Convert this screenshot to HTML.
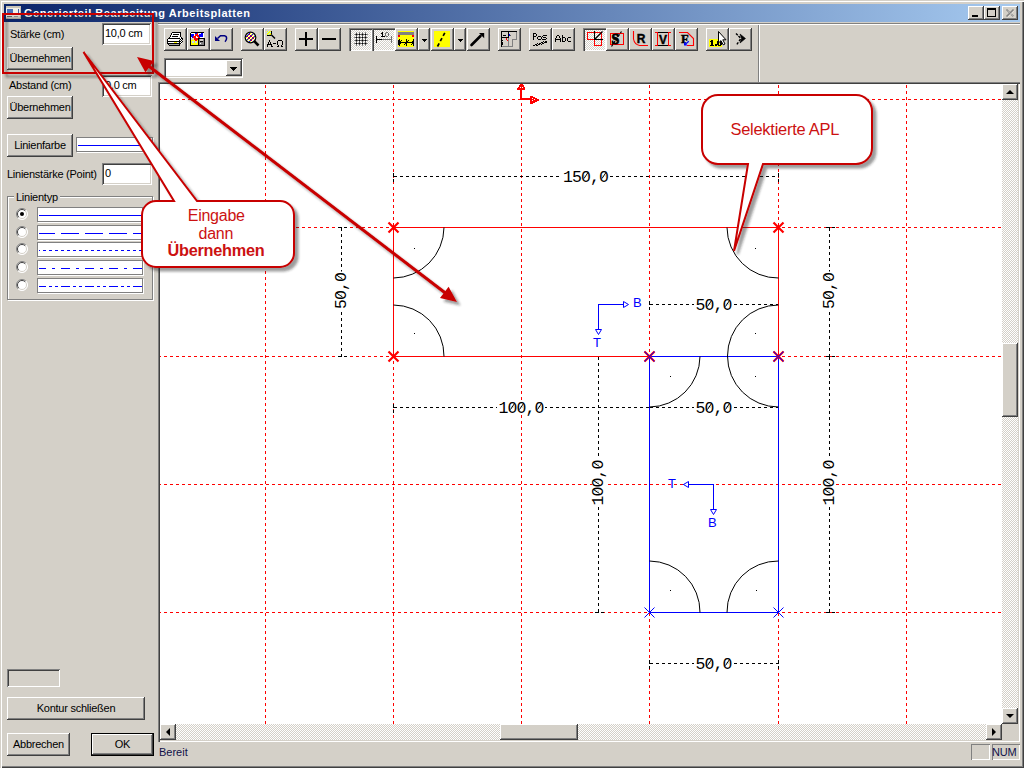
<!DOCTYPE html>
<html><head><meta charset="utf-8">
<style>
*{box-sizing:border-box}
html,body{margin:0;padding:0}
body{width:1024px;height:768px;position:relative;overflow:hidden;background:#d4d0c8;font-family:"Liberation Sans",sans-serif;font-size:11px;color:#000;letter-spacing:-0.25px}
.a{position:absolute}
.raised{background:#d4d0c8;box-shadow:inset -1px -1px #404040,inset 1px 1px #fff,inset -2px -2px #808080}
.sunken{background:#fff;box-shadow:inset 1px 1px #808080,inset -1px -1px #fff,inset 2px 2px #404040,inset -2px -2px #d4d0c8}
.thin{background:#d4d0c8;box-shadow:inset 1px 1px #808080,inset -1px -1px #fff}
.tb{background:#d4d0c8;box-shadow:inset -1px -1px #404040,inset 1px 1px #fff,inset -2px -2px #808080}
.pressed{background:repeating-conic-gradient(#d4d0c8 0% 25%,#fff 0% 50%) 0 0/2px 2px;box-shadow:inset 1px 1px #808080,inset 2px 2px #404040,inset -1px -1px #fff}
.track{background:repeating-conic-gradient(#d4d0c8 0% 25%,#fff 0% 50%) 0 0/2px 2px}
.lbl{white-space:nowrap;line-height:13px}
.btxt{position:absolute;left:0;right:0;text-align:center;white-space:nowrap;line-height:13px}
.txt{white-space:nowrap}
</style></head>
<body>
<!-- window frame -->
<div class="a" style="left:0;top:0;width:1024px;height:768px;box-shadow:inset 1px 1px #d4d0c8,inset 2px 2px #fff,inset -1px -1px #404040,inset -2px -2px #808080"></div>
<!-- title bar -->
<div class="a" style="left:4px;top:4px;width:1016px;height:18px;background:linear-gradient(90deg,#0a246a,#a6caf0)"></div>
<div class="a txt" style="left:24px;top:5px;font-weight:bold;font-size:11px;letter-spacing:0.55px;line-height:16px;color:#fff">Generierteil Bearbeitung Arbeitsplatten</div>
<div class="a raised" style="left:968px;top:6px;width:16px;height:14px"><div class="a" style="left:4px;top:9px;width:6px;height:2px;background:#000"></div></div>
<div class="a raised" style="left:984px;top:6px;width:16px;height:14px"><div class="a" style="left:3px;top:2px;width:9px;height:9px;border:1px solid #000;border-top-width:2px"></div></div>
<div class="a raised" style="left:1002px;top:6px;width:16px;height:14px">
<svg class="a" style="left:0;top:0" width="16" height="14"><path d="M4.5 3.5 L11.5 10.5 M11.5 3.5 L4.5 10.5" stroke="#808080" stroke-width="1.5"/><path d="M5.5 4.5 L12.5 11.5 M12.5 4.5 L5.5 11.5" stroke="#fff" stroke-width="0.6" opacity="0.6"/></svg></div>

<!-- LEFT PANEL -->
<div class="a lbl" style="left:10px;top:28px">Stärke (cm)</div>
<div class="a sunken" style="left:102px;top:23px;width:49px;height:22px"><div class="a txt" style="left:3px;top:4px;line-height:13px">10,0 cm</div></div>
<div class="a raised" style="left:7px;top:47px;width:66px;height:23px"><div class="btxt" style="top:5px">Übernehmen</div></div>

<div class="a lbl" style="left:9px;top:79px">Abstand (cm)</div>
<div class="a sunken" style="left:102px;top:75px;width:50px;height:22px"><div class="a txt" style="left:3px;top:4px;line-height:13px">0,0 cm</div></div>
<div class="a raised" style="left:7px;top:96px;width:66px;height:23px"><div class="btxt" style="top:5px">Übernehmen</div></div>

<div class="a raised" style="left:7px;top:134px;width:66px;height:23px"><div class="btxt" style="top:5px">Linienfarbe</div></div>
<div class="a" style="left:76px;top:137px;width:77px;height:15px;background:#fff;border:1px solid #808080;box-shadow:1px 1px #fff"><div class="a" style="left:1px;top:7px;width:72px;height:1px;background:#0000ff"></div></div>

<div class="a lbl" style="left:7px;top:168px">Linienstärke (Point)</div>
<div class="a sunken" style="left:102px;top:163px;width:50px;height:22px"><div class="a txt" style="left:3px;top:4px;line-height:13px">0</div></div>

<!-- group -->
<div class="a" style="left:7px;top:196px;width:146px;height:104px;border:1px solid #808080;box-shadow:1px 1px #fff,inset 1px 1px #fff"></div>
<div class="a lbl" style="left:14px;top:191px;background:#d4d0c8;padding:0 2px">Linientyp</div>

<svg class="a" style="left:16px;top:208px" width="12" height="12"><circle cx="6" cy="6" r="5.5" fill="#fff"/><path d="M2.1 9.9 A5.5 5.5 0 0 1 9.9 2.1" fill="none" stroke="#808080"/><path d="M9.9 2.1 A5.5 5.5 0 0 1 2.1 9.9" fill="none" stroke="#fff"/><path d="M2.8 9.2 A4.5 4.5 0 0 1 9.2 2.8" fill="none" stroke="#404040"/><path d="M9.2 2.8 A4.5 4.5 0 0 1 2.8 9.2" fill="none" stroke="#d4d0c8"/><circle cx="6" cy="6" r="2" fill="#000"/></svg>
<div class="a" style="left:37px;top:207px;width:106px;height:15px;background:#fff;border:1px solid #808080;box-shadow:1px 1px #fff"></div><svg class="a" style="left:39px;top:215px" width="103" height="1"><line x1="0" y1="0.5" x2="103" y2="0.5" stroke="#0000ff" shape-rendering="crispEdges"/></svg>
<svg class="a" style="left:16px;top:226px" width="12" height="12"><circle cx="6" cy="6" r="5.5" fill="#fff"/><path d="M2.1 9.9 A5.5 5.5 0 0 1 9.9 2.1" fill="none" stroke="#808080"/><path d="M9.9 2.1 A5.5 5.5 0 0 1 2.1 9.9" fill="none" stroke="#fff"/><path d="M2.8 9.2 A4.5 4.5 0 0 1 9.2 2.8" fill="none" stroke="#404040"/><path d="M9.2 2.8 A4.5 4.5 0 0 1 2.8 9.2" fill="none" stroke="#d4d0c8"/></svg>
<div class="a" style="left:37px;top:225px;width:106px;height:15px;background:#fff;border:1px solid #808080;box-shadow:1px 1px #fff"></div><svg class="a" style="left:39px;top:233px" width="103" height="1"><line x1="0" y1="0.5" x2="103" y2="0.5" stroke="#0000ff" shape-rendering="crispEdges" stroke-dasharray="18 6" stroke-dashoffset="2"/></svg>
<svg class="a" style="left:16px;top:243px" width="12" height="12"><circle cx="6" cy="6" r="5.5" fill="#fff"/><path d="M2.1 9.9 A5.5 5.5 0 0 1 9.9 2.1" fill="none" stroke="#808080"/><path d="M9.9 2.1 A5.5 5.5 0 0 1 2.1 9.9" fill="none" stroke="#fff"/><path d="M2.8 9.2 A4.5 4.5 0 0 1 9.2 2.8" fill="none" stroke="#404040"/><path d="M9.2 2.8 A4.5 4.5 0 0 1 2.8 9.2" fill="none" stroke="#d4d0c8"/></svg>
<div class="a" style="left:37px;top:242px;width:106px;height:15px;background:#fff;border:1px solid #808080;box-shadow:1px 1px #fff"></div><svg class="a" style="left:39px;top:250px" width="103" height="1"><line x1="0" y1="0.5" x2="103" y2="0.5" stroke="#0000ff" shape-rendering="crispEdges" stroke-dasharray="3 3" stroke-dashoffset="2"/></svg>
<svg class="a" style="left:16px;top:261px" width="12" height="12"><circle cx="6" cy="6" r="5.5" fill="#fff"/><path d="M2.1 9.9 A5.5 5.5 0 0 1 9.9 2.1" fill="none" stroke="#808080"/><path d="M9.9 2.1 A5.5 5.5 0 0 1 2.1 9.9" fill="none" stroke="#fff"/><path d="M2.8 9.2 A4.5 4.5 0 0 1 9.2 2.8" fill="none" stroke="#404040"/><path d="M9.2 2.8 A4.5 4.5 0 0 1 2.8 9.2" fill="none" stroke="#d4d0c8"/></svg>
<div class="a" style="left:37px;top:260px;width:106px;height:15px;background:#fff;border:1px solid #808080;box-shadow:1px 1px #fff"></div><svg class="a" style="left:39px;top:268px" width="103" height="1"><line x1="0" y1="0.5" x2="103" y2="0.5" stroke="#0000ff" shape-rendering="crispEdges" stroke-dasharray="9 6 3 6" stroke-dashoffset="2"/></svg>
<svg class="a" style="left:16px;top:279px" width="12" height="12"><circle cx="6" cy="6" r="5.5" fill="#fff"/><path d="M2.1 9.9 A5.5 5.5 0 0 1 9.9 2.1" fill="none" stroke="#808080"/><path d="M9.9 2.1 A5.5 5.5 0 0 1 2.1 9.9" fill="none" stroke="#fff"/><path d="M2.8 9.2 A4.5 4.5 0 0 1 9.2 2.8" fill="none" stroke="#404040"/><path d="M9.2 2.8 A4.5 4.5 0 0 1 2.8 9.2" fill="none" stroke="#d4d0c8"/></svg>
<div class="a" style="left:37px;top:278px;width:106px;height:15px;background:#fff;border:1px solid #808080;box-shadow:1px 1px #fff"></div><svg class="a" style="left:39px;top:286px" width="103" height="1"><line x1="0" y1="0.5" x2="103" y2="0.5" stroke="#0000ff" shape-rendering="crispEdges" stroke-dasharray="9 3 3 3 3 3" stroke-dashoffset="2"/></svg>
<!-- bottom left -->
<div class="a" style="left:7px;top:669px;width:53px;height:18px;background:#d4d0c8;box-shadow:inset 1px 1px #808080,inset -1px -1px #fff,inset 2px 2px #404040,inset -2px -2px #d4d0c8"></div>
<div class="a raised" style="left:7px;top:697px;width:138px;height:23px"><div class="btxt" style="top:5px">Kontur schließen</div></div>
<div class="a raised" style="left:7px;top:733px;width:63px;height:23px"><div class="btxt" style="top:5px">Abbrechen</div></div>
<div class="a" style="left:91px;top:733px;width:63px;height:23px;background:#d4d0c8;box-shadow:inset 0 0 0 1px #000,inset -2px -2px #404040,inset 2px 2px #fff,inset -3px -3px #808080"><div class="btxt" style="top:5px">OK</div></div>

<!-- TOOLBAR etched lines -->
<div class="a" style="left:158px;top:23px;width:862px;height:1px;background:#808080"></div>
<div class="a" style="left:158px;top:24px;width:862px;height:1px;background:#fff"></div>
<div class="a" style="left:758px;top:25px;width:1px;height:57px;background:#808080"></div>
<div class="a" style="left:759px;top:25px;width:1px;height:57px;background:#fff"></div>

<!-- CANVAS FRAME -->
<div class="a" style="left:158px;top:82px;width:862px;height:660px;box-shadow:inset 1px 1px #808080,inset 2px 2px #404040,inset -1px -1px #fff,inset -2px -2px #d4d0c8"></div>
<div class="a" style="left:160px;top:84px;width:842px;height:640px;background:#fff;overflow:hidden"></div>
<svg class="a" style="left:160px;top:84px" width="842" height="640" viewBox="160 84 842 640">
<g fill="none" stroke-width="1" shape-rendering="crispEdges">
<line x1="265.5" y1="84" x2="265.5" y2="724" stroke="#f00" stroke-dasharray="3 3" stroke-dashoffset="-1"/>
<line x1="393.5" y1="84" x2="393.5" y2="724" stroke="#f00" stroke-dasharray="3 3" stroke-dashoffset="-1"/>
<line x1="521.5" y1="84" x2="521.5" y2="724" stroke="#f00" stroke-dasharray="3 3" stroke-dashoffset="-1"/>
<line x1="649.5" y1="84" x2="649.5" y2="724" stroke="#f00" stroke-dasharray="3 3" stroke-dashoffset="-1"/>
<line x1="778.5" y1="84" x2="778.5" y2="724" stroke="#f00" stroke-dasharray="3 3" stroke-dashoffset="-1"/>
<line x1="906.5" y1="84" x2="906.5" y2="724" stroke="#f00" stroke-dasharray="3 3" stroke-dashoffset="-1"/>
<line x1="160" y1="99.5" x2="1002" y2="99.5" stroke="#f00" stroke-dasharray="3 3" stroke-dashoffset="2"/>
<line x1="160" y1="227.5" x2="1002" y2="227.5" stroke="#f00" stroke-dasharray="3 3" stroke-dashoffset="2"/>
<line x1="160" y1="356.5" x2="1002" y2="356.5" stroke="#f00" stroke-dasharray="3 3" stroke-dashoffset="2"/>
<line x1="160" y1="484.5" x2="1002" y2="484.5" stroke="#f00" stroke-dasharray="3 3" stroke-dashoffset="2"/>
<line x1="160" y1="612.5" x2="1002" y2="612.5" stroke="#f00" stroke-dasharray="3 3" stroke-dashoffset="2"/>
<line x1="393" y1="176.5" x2="779" y2="176.5" stroke="#000" stroke-dasharray="3 3" stroke-dashoffset="-1"/>
<line x1="393.5" y1="173" x2="393.5" y2="182" stroke="#000" stroke-dasharray="3 3"/>
<rect x="393" y="176" width="1" height="1" fill="#000"/>
<line x1="778.5" y1="173" x2="778.5" y2="182" stroke="#000" stroke-dasharray="3 3"/>
<rect x="778" y="176" width="1" height="1" fill="#000"/>
<line x1="341.5" y1="227" x2="341.5" y2="357" stroke="#000" stroke-dasharray="3 3" stroke-dashoffset="-1"/>
<line x1="338" y1="227.5" x2="347" y2="227.5" stroke="#000" stroke-dasharray="3 3"/>
<rect x="341" y="227" width="1" height="1" fill="#000"/>
<line x1="338" y1="356.5" x2="347" y2="356.5" stroke="#000" stroke-dasharray="3 3"/>
<rect x="341" y="356" width="1" height="1" fill="#000"/>
<line x1="829.5" y1="227" x2="829.5" y2="357" stroke="#000" stroke-dasharray="3 3" stroke-dashoffset="-1"/>
<line x1="826" y1="227.5" x2="835" y2="227.5" stroke="#000" stroke-dasharray="3 3"/>
<rect x="829" y="227" width="1" height="1" fill="#000"/>
<line x1="826" y1="356.5" x2="835" y2="356.5" stroke="#000" stroke-dasharray="3 3"/>
<rect x="829" y="356" width="1" height="1" fill="#000"/>
<line x1="649" y1="304.5" x2="779" y2="304.5" stroke="#000" stroke-dasharray="3 3" stroke-dashoffset="-1"/>
<line x1="649.5" y1="301" x2="649.5" y2="310" stroke="#000" stroke-dasharray="3 3"/>
<rect x="649" y="304" width="1" height="1" fill="#000"/>
<line x1="393" y1="407.5" x2="650" y2="407.5" stroke="#000" stroke-dasharray="3 3" stroke-dashoffset="-1"/>
<line x1="393.5" y1="404" x2="393.5" y2="413" stroke="#000" stroke-dasharray="3 3"/>
<rect x="393" y="407" width="1" height="1" fill="#000"/>
<line x1="649.5" y1="404" x2="649.5" y2="413" stroke="#000" stroke-dasharray="3 3"/>
<rect x="649" y="407" width="1" height="1" fill="#000"/>
<line x1="649" y1="407.5" x2="779" y2="407.5" stroke="#000" stroke-dasharray="3 3" stroke-dashoffset="-1"/>
<line x1="598.5" y1="356" x2="598.5" y2="613" stroke="#000" stroke-dasharray="3 3" stroke-dashoffset="-1"/>
<line x1="595" y1="612.5" x2="604" y2="612.5" stroke="#000" stroke-dasharray="3 3"/>
<rect x="598" y="612" width="1" height="1" fill="#000"/>
<line x1="829.5" y1="356" x2="829.5" y2="613" stroke="#000" stroke-dasharray="3 3" stroke-dashoffset="-1"/>
<line x1="826" y1="612.5" x2="835" y2="612.5" stroke="#000" stroke-dasharray="3 3"/>
<rect x="829" y="612" width="1" height="1" fill="#000"/>
<line x1="649" y1="663.5" x2="779" y2="663.5" stroke="#000" stroke-dasharray="3 3" stroke-dashoffset="-1"/>
<line x1="649.5" y1="660" x2="649.5" y2="669" stroke="#000" stroke-dasharray="3 3"/>
<rect x="649" y="663" width="1" height="1" fill="#000"/>
<line x1="778.5" y1="660" x2="778.5" y2="669" stroke="#000" stroke-dasharray="3 3"/>
<rect x="778" y="663" width="1" height="1" fill="#000"/>
</g>
<g fill="none" stroke-width="1" shape-rendering="crispEdges">
<path d="M393.5 356.5 V227.5 H778.5 V356.5" stroke="#f00"/>
<line x1="393" y1="356.5" x2="649" y2="356.5" stroke="#f00"/>
<path d="M649.5 356.5 H778.5 V612.5 H649.5 Z" stroke="#00f"/>
</g>
<g fill="none" stroke="#000" stroke-width="1">
<path d="M444 227.5 A51 51 0 0 1 393.5 278"/>
<path d="M393.5 305 A51 51 0 0 1 444 356.5"/>
<path d="M727 227.5 A51 51 0 0 0 778.5 278"/>
<path d="M778.5 305 A51 51 0 0 0 778.5 407"/>
<path d="M700 356.5 A51 51 0 0 1 649.5 407"/>
<path d="M649.5 561 A51 51 0 0 1 700 612.5"/>
<path d="M727 612.5 A51 51 0 0 1 778.5 561"/>
</g>
<g fill="#000">
<rect x="414" y="248" width="1" height="1"/>
<rect x="414" y="333" width="1" height="1"/>
<rect x="755" y="248" width="1" height="1"/>
<rect x="755" y="333" width="1" height="1"/>
<rect x="755" y="376" width="1" height="1"/>
<rect x="670" y="376" width="1" height="1"/>
<rect x="670" y="590" width="1" height="1"/>
<rect x="756" y="590" width="1" height="1"/>
</g>
<path d="M388.5 222.5 L398.5 232.5 M398.5 222.5 L388.5 232.5" stroke="#f00" stroke-width="2.2" fill="none"/>
<path d="M773.5 222.5 L783.5 232.5 M783.5 222.5 L773.5 232.5" stroke="#f00" stroke-width="2.2" fill="none"/>
<path d="M388.5 351.5 L398.5 361.5 M398.5 351.5 L388.5 361.5" stroke="#f00" stroke-width="2.2" fill="none"/>
<path d="M644.5 351.5 L654.5 361.5 M654.5 351.5 L644.5 361.5" stroke="#f00" stroke-width="2.2" fill="none"/>
<path d="M773.5 351.5 L783.5 361.5 M783.5 351.5 L773.5 361.5" stroke="#f00" stroke-width="2.2" fill="none"/>
<path d="M644.5 351.5 L654.5 361.5 M654.5 351.5 L644.5 361.5" stroke="#00f" stroke-width="1" fill="none"/>
<path d="M773.5 351.5 L783.5 361.5 M783.5 351.5 L773.5 361.5" stroke="#00f" stroke-width="1" fill="none"/>
<path d="M644.5 607.5 L654.5 617.5 M654.5 607.5 L644.5 617.5" stroke="#00f" stroke-width="1" fill="none"/>
<path d="M773.5 607.5 L783.5 617.5 M783.5 607.5 L773.5 617.5" stroke="#00f" stroke-width="1" fill="none"/>
<g font-family="Liberation Mono" font-size="16.5" letter-spacing="-0.9" fill="#000">
<rect x="561.5" y="170" width="48" height="13" fill="#fff"/>
<g transform="translate(585.5,176)"><text x="-22.5" y="6">150,0</text><rect x="-0.7" y="-1.2" width="2.4" height="2.4" fill="#fff"/><path d="M-1.5 2.5 L2.5 -3.5" stroke="#000" stroke-width="1" fill="none"/><rect x="17.3" y="-1.2" width="2.4" height="2.4" fill="#fff"/><path d="M16.5 2.5 L20.5 -3.5" stroke="#000" stroke-width="1" fill="none"/></g>
<rect x="335" y="271.5" width="13" height="39" fill="#fff"/>
<g transform="translate(340,291) rotate(-90)"><text x="-18.0" y="6">50,0</text><rect x="-5.2" y="-1.2" width="2.4" height="2.4" fill="#fff"/><path d="M-6.0 2.5 L-2.0 -3.5" stroke="#000" stroke-width="1" fill="none"/><rect x="12.8" y="-1.2" width="2.4" height="2.4" fill="#fff"/><path d="M12.0 2.5 L16.0 -3.5" stroke="#000" stroke-width="1" fill="none"/></g>
<rect x="823" y="271.5" width="13" height="39" fill="#fff"/>
<g transform="translate(828,291) rotate(-90)"><text x="-18.0" y="6">50,0</text><rect x="-5.2" y="-1.2" width="2.4" height="2.4" fill="#fff"/><path d="M-6.0 2.5 L-2.0 -3.5" stroke="#000" stroke-width="1" fill="none"/><rect x="12.8" y="-1.2" width="2.4" height="2.4" fill="#fff"/><path d="M12.0 2.5 L16.0 -3.5" stroke="#000" stroke-width="1" fill="none"/></g>
<rect x="694.0" y="298" width="39" height="13" fill="#fff"/>
<g transform="translate(713.5,304)"><text x="-18.0" y="6">50,0</text><rect x="-5.2" y="-1.2" width="2.4" height="2.4" fill="#fff"/><path d="M-6.0 2.5 L-2.0 -3.5" stroke="#000" stroke-width="1" fill="none"/><rect x="12.8" y="-1.2" width="2.4" height="2.4" fill="#fff"/><path d="M12.0 2.5 L16.0 -3.5" stroke="#000" stroke-width="1" fill="none"/></g>
<rect x="497.0" y="401" width="48" height="13" fill="#fff"/>
<g transform="translate(521,407)"><text x="-22.5" y="6">100,0</text><rect x="-9.7" y="-1.2" width="2.4" height="2.4" fill="#fff"/><path d="M-10.5 2.5 L-6.5 -3.5" stroke="#000" stroke-width="1" fill="none"/><rect x="-0.7" y="-1.2" width="2.4" height="2.4" fill="#fff"/><path d="M-1.5 2.5 L2.5 -3.5" stroke="#000" stroke-width="1" fill="none"/><rect x="17.3" y="-1.2" width="2.4" height="2.4" fill="#fff"/><path d="M16.5 2.5 L20.5 -3.5" stroke="#000" stroke-width="1" fill="none"/></g>
<rect x="694.0" y="401" width="39" height="13" fill="#fff"/>
<g transform="translate(713.5,407)"><text x="-18.0" y="6">50,0</text><rect x="-5.2" y="-1.2" width="2.4" height="2.4" fill="#fff"/><path d="M-6.0 2.5 L-2.0 -3.5" stroke="#000" stroke-width="1" fill="none"/><rect x="12.8" y="-1.2" width="2.4" height="2.4" fill="#fff"/><path d="M12.0 2.5 L16.0 -3.5" stroke="#000" stroke-width="1" fill="none"/></g>
<rect x="592" y="459.0" width="13" height="48" fill="#fff"/>
<g transform="translate(597,483) rotate(-90)"><text x="-22.5" y="6">100,0</text><rect x="-9.7" y="-1.2" width="2.4" height="2.4" fill="#fff"/><path d="M-10.5 2.5 L-6.5 -3.5" stroke="#000" stroke-width="1" fill="none"/><rect x="-0.7" y="-1.2" width="2.4" height="2.4" fill="#fff"/><path d="M-1.5 2.5 L2.5 -3.5" stroke="#000" stroke-width="1" fill="none"/><rect x="17.3" y="-1.2" width="2.4" height="2.4" fill="#fff"/><path d="M16.5 2.5 L20.5 -3.5" stroke="#000" stroke-width="1" fill="none"/></g>
<rect x="823" y="459.0" width="13" height="48" fill="#fff"/>
<g transform="translate(828,483) rotate(-90)"><text x="-22.5" y="6">100,0</text><rect x="-9.7" y="-1.2" width="2.4" height="2.4" fill="#fff"/><path d="M-10.5 2.5 L-6.5 -3.5" stroke="#000" stroke-width="1" fill="none"/><rect x="-0.7" y="-1.2" width="2.4" height="2.4" fill="#fff"/><path d="M-1.5 2.5 L2.5 -3.5" stroke="#000" stroke-width="1" fill="none"/><rect x="17.3" y="-1.2" width="2.4" height="2.4" fill="#fff"/><path d="M16.5 2.5 L20.5 -3.5" stroke="#000" stroke-width="1" fill="none"/></g>
<rect x="694.0" y="657" width="39" height="13" fill="#fff"/>
<g transform="translate(713.5,663)"><text x="-18.0" y="6">50,0</text><rect x="-5.2" y="-1.2" width="2.4" height="2.4" fill="#fff"/><path d="M-6.0 2.5 L-2.0 -3.5" stroke="#000" stroke-width="1" fill="none"/><rect x="12.8" y="-1.2" width="2.4" height="2.4" fill="#fff"/><path d="M12.0 2.5 L16.0 -3.5" stroke="#000" stroke-width="1" fill="none"/></g>
</g>
<g stroke="#00f" fill="none" stroke-width="1" shape-rendering="crispEdges">
<path d="M623 304.5 H598.5 V329"/>
<path d="M683 484.5 H713.5 V509"/>
</g>
<g stroke="#00f" fill="#fff" stroke-width="1">
<path d="M623.5 301.5 L628.5 304.5 L623.5 307.5 Z"/>
<path d="M595.5 329.5 L601.5 329.5 L598.5 334.5 Z"/>
<path d="M688.5 481.5 L683.5 484.5 L688.5 487.5 Z"/>
<path d="M710.5 509.5 L716.5 509.5 L713.5 514.5 Z"/>
</g>
<g font-family="Liberation Sans" font-size="13" fill="#00f">
<text x="633" y="307">B</text>
<text x="593" y="347">T</text>
<text x="668" y="488">T</text>
<text x="708" y="527">B</text>
</g>
<g fill="#f00" shape-rendering="crispEdges">
<rect x="520" y="90" width="2" height="10"/>
<rect x="520" y="98" width="10" height="2"/>
<rect x="520" y="84" width="3" height="1"/>
<rect x="519" y="85" width="5" height="2"/>
<rect x="518" y="87" width="7" height="1"/>
<rect x="517" y="88" width="8" height="2"/>
<rect x="530" y="96" width="3" height="8"/>
<rect x="533" y="97" width="2" height="6"/>
<rect x="535" y="98" width="2" height="4"/>
<rect x="537" y="99" width="2" height="2"/>
</g>
<g fill="#fff" shape-rendering="crispEdges">
<rect x="520" y="87" width="1" height="1"/>
<rect x="522" y="87" width="1" height="1"/>
<rect x="532" y="98" width="1" height="1"/>
<rect x="532" y="100" width="1" height="1"/>
<rect x="534" y="99" width="1" height="1"/>
</g>
</svg>
<!-- vscroll -->
<div class="a track" style="left:1002px;top:84px;width:16px;height:640px"></div>
<div class="a raised" style="left:1002px;top:84px;width:16px;height:16px"><svg class="a" width="16" height="16"><path d="M4 10 L8 6 L12 10 Z" fill="#000"/></svg></div>
<div class="a raised" style="left:1002px;top:343px;width:16px;height:74px"></div>
<div class="a raised" style="left:1002px;top:708px;width:16px;height:16px"><svg class="a" width="16" height="16"><path d="M4 6 L8 10 L12 6 Z" fill="#000"/></svg></div>
<!-- hscroll -->
<div class="a track" style="left:160px;top:724px;width:842px;height:16px"></div>
<div class="a raised" style="left:160px;top:724px;width:16px;height:16px"><svg class="a" width="16" height="16"><path d="M10 4 L6 8 L10 12 Z" fill="#000"/></svg></div>
<div class="a raised" style="left:500px;top:724px;width:78px;height:16px"></div>
<div class="a raised" style="left:986px;top:724px;width:16px;height:16px"><svg class="a" width="16" height="16"><path d="M6 4 L10 8 L6 12 Z" fill="#000"/></svg></div>
<div class="a" style="left:1002px;top:724px;width:16px;height:16px;background:#d4d0c8"></div>

<!-- STATUS BAR -->
<div class="a txt" style="left:159px;top:746px;line-height:13px;color:#101048;letter-spacing:0">Bereit</div>
<div class="a thin" style="left:971px;top:744px;width:19px;height:16px"></div>
<div class="a thin" style="left:992px;top:744px;width:28px;height:16px"><div class="a txt" style="left:0px;top:2px;line-height:13px;color:#101048">NUM</div></div>

<div class="a tb" style="left:164px;top:28px;width:23px;height:23px"></div>
<svg class="a" style="left:164px;top:28px" width="23" height="23"><g shape-rendering="crispEdges">
<path d="M8 4 H17 V5 H16 V9 H15 V10 H5 V9 H6 V7 H7 V5 H8 Z" fill="#fff"/>
<rect x="8" y="4" width="9" height="1" fill="#000"/><rect x="7" y="5" width="1" height="2" fill="#000"/><rect x="6" y="7" width="1" height="2" fill="#000"/><rect x="5" y="9" width="1" height="1" fill="#000"/><rect x="16" y="5" width="1" height="4" fill="#000"/><rect x="9" y="6" width="6" height="1" fill="#000"/><rect x="8" y="8" width="6" height="1" fill="#000"/>
<rect x="4" y="10" width="12" height="1" fill="#000"/><rect x="3" y="11" width="1" height="5" fill="#000"/><rect x="4" y="16" width="1" height="1" fill="#000"/><rect x="5" y="17" width="11" height="1" fill="#000"/><rect x="4" y="13" width="12" height="1" fill="#000"/><rect x="4" y="15" width="12" height="1" fill="#000"/>
<rect x="4" y="11" width="11" height="2" fill="#fff"/><rect x="4" y="14" width="11" height="1" fill="#fff"/><rect x="10" y="14" width="3" height="1" fill="#ffff00"/>
<rect x="5" y="16" width="10" height="1" fill="#a0a0a0"/>
<rect x="16" y="8" width="1" height="1" fill="#000"/><rect x="17" y="9" width="1" height="1" fill="#000"/><rect x="15" y="10" width="1" height="1" fill="#000"/><rect x="16" y="11" width="1" height="1" fill="#000"/><rect x="17" y="12" width="1" height="1" fill="#000"/><rect x="18" y="11" width="1" height="1" fill="#000"/><rect x="15" y="12" width="1" height="1" fill="#000"/><rect x="16" y="13" width="1" height="1" fill="#000"/><rect x="18" y="13" width="1" height="1" fill="#000"/><rect x="17" y="14" width="1" height="1" fill="#000"/><rect x="15" y="14" width="1" height="1" fill="#000"/><rect x="16" y="15" width="1" height="1" fill="#000"/><rect x="15" y="16" width="1" height="1" fill="#000"/><rect x="17" y="10" width="1" height="1" fill="#000"/><rect x="18" y="10" width="1" height="1" fill="#000"/>
<rect x="16" y="9" width="1" height="1" fill="#fff"/><rect x="16" y="10" width="1" height="1" fill="#fff"/><rect x="17" y="11" width="1" height="1" fill="#fff"/><rect x="16" y="12" width="1" height="1" fill="#fff"/><rect x="17" y="13" width="1" height="1" fill="#fff"/><rect x="16" y="14" width="1" height="1" fill="#fff"/><rect x="17" y="15" width="1" height="1" fill="#fff"/>
</g></svg>
<div class="a tb" style="left:187px;top:28px;width:23px;height:23px"></div>
<svg class="a" style="left:187px;top:28px" width="23" height="23"><g shape-rendering="crispEdges">
<rect x="4" y="4" width="13" height="1" fill="#000"/><rect x="3" y="5" width="1" height="12" fill="#000"/><rect x="3" y="17" width="15" height="1" fill="#000"/>
<rect x="4" y="5" width="13" height="5" fill="#fff"/>
<rect x="4" y="6" width="3" height="3" fill="#0000ff"/><rect x="5" y="9" width="2" height="1" fill="#0000ff"/><rect x="8" y="5" width="2" height="1" fill="#0000ff"/><rect x="12" y="6" width="4" height="3" fill="#0000ff"/><rect x="14" y="5" width="2" height="1" fill="#0000ff"/><rect x="11" y="8" width="2" height="2" fill="#0000ff"/>
<rect x="4" y="10" width="7" height="2" fill="#d4d0c8"/>
<rect x="4" y="12" width="7" height="5" fill="#ffff00"/>
<rect x="5" y="13" width="2" height="2" fill="#c0d8f0"/><rect x="8" y="13" width="2" height="2" fill="#c0d8f0"/>
<rect x="5" y="11" width="1" height="1" fill="#ffff00"/>
<path d="M6 8 H8 V6 H10 V5 H11 V7 H12 V9 H13 V11 H11 V12 H10 V13 H8 V12 H7 V10 H6 Z" fill="#ff0000"/>
<rect x="9" y="8" width="1" height="2" fill="#fff"/><rect x="10" y="9" width="1" height="1" fill="#fff"/>
<rect x="11" y="10" width="7" height="1" fill="#000"/><rect x="11" y="10" width="1" height="8" fill="#000"/><rect x="17" y="10" width="1" height="8" fill="#000"/>
<rect x="12" y="11" width="5" height="6" fill="#808080"/>
<rect x="13" y="11" width="3" height="2" fill="#d4d0c8"/><rect x="13" y="13" width="3" height="1" fill="#000"/><rect x="13" y="15" width="1" height="1" fill="#fff"/>
</g></svg>
<div class="a tb" style="left:210px;top:28px;width:23px;height:23px"></div>
<svg class="a" style="left:210px;top:28px" width="23" height="23">
<path d="M5 8 V13 H10 Z" fill="#000080"/>
<path d="M7.5 10.5 L10.5 7.8 H14.5 Q16.6 8.2 16.6 10.3 Q16.6 12.3 15 13.8" fill="none" stroke="#000080" stroke-width="1.5"/>
</svg>
<div class="a tb" style="left:241px;top:28px;width:23px;height:23px"></div>
<svg class="a" style="left:241px;top:28px" width="23" height="23"><g shape-rendering="crispEdges"><rect x="5" y="8" width="1" height="1" fill="#0000ff"/><rect x="5" y="9" width="1" height="1" fill="#ffff00"/><rect x="5" y="10" width="1" height="1" fill="#fff"/><rect x="6" y="7" width="1" height="1" fill="#0000ff"/><rect x="6" y="8" width="1" height="1" fill="#ff0000"/><rect x="6" y="9" width="1" height="1" fill="#fff"/><rect x="6" y="10" width="1" height="1" fill="#ffff00"/><rect x="6" y="11" width="1" height="1" fill="#0000ff"/><rect x="7" y="6" width="1" height="1" fill="#0000ff"/><rect x="7" y="7" width="1" height="1" fill="#ffff00"/><rect x="7" y="8" width="1" height="1" fill="#fff"/><rect x="7" y="9" width="1" height="1" fill="#ff0000"/><rect x="7" y="10" width="1" height="1" fill="#0000ff"/><rect x="7" y="11" width="1" height="1" fill="#ffff00"/><rect x="7" y="12" width="1" height="1" fill="#fff"/><rect x="8" y="5" width="1" height="1" fill="#0000ff"/><rect x="8" y="6" width="1" height="1" fill="#ff0000"/><rect x="8" y="7" width="1" height="1" fill="#fff"/><rect x="8" y="8" width="1" height="1" fill="#ffff00"/><rect x="8" y="9" width="1" height="1" fill="#0000ff"/><rect x="8" y="10" width="1" height="1" fill="#ff0000"/><rect x="8" y="11" width="1" height="1" fill="#fff"/><rect x="8" y="12" width="1" height="1" fill="#ffff00"/><rect x="8" y="13" width="1" height="1" fill="#0000ff"/><rect x="9" y="5" width="1" height="1" fill="#ffff00"/><rect x="9" y="6" width="1" height="1" fill="#fff"/><rect x="9" y="7" width="1" height="1" fill="#ff0000"/><rect x="9" y="8" width="1" height="1" fill="#0000ff"/><rect x="9" y="9" width="1" height="1" fill="#ffff00"/><rect x="9" y="10" width="1" height="1" fill="#fff"/><rect x="9" y="11" width="1" height="1" fill="#ff0000"/><rect x="9" y="12" width="1" height="1" fill="#0000ff"/><rect x="9" y="13" width="1" height="1" fill="#ffff00"/><rect x="10" y="5" width="1" height="1" fill="#fff"/><rect x="10" y="6" width="1" height="1" fill="#ffff00"/><rect x="10" y="7" width="1" height="1" fill="#0000ff"/><rect x="10" y="8" width="1" height="1" fill="#ff0000"/><rect x="10" y="9" width="1" height="1" fill="#fff"/><rect x="10" y="10" width="1" height="1" fill="#ffff00"/><rect x="10" y="11" width="1" height="1" fill="#0000ff"/><rect x="10" y="12" width="1" height="1" fill="#ff0000"/><rect x="10" y="13" width="1" height="1" fill="#fff"/><rect x="11" y="6" width="1" height="1" fill="#0000ff"/><rect x="11" y="7" width="1" height="1" fill="#ffff00"/><rect x="11" y="8" width="1" height="1" fill="#fff"/><rect x="11" y="9" width="1" height="1" fill="#ff0000"/><rect x="11" y="10" width="1" height="1" fill="#0000ff"/><rect x="11" y="11" width="1" height="1" fill="#ffff00"/><rect x="11" y="12" width="1" height="1" fill="#fff"/><rect x="12" y="7" width="1" height="1" fill="#fff"/><rect x="12" y="8" width="1" height="1" fill="#ffff00"/><rect x="12" y="9" width="1" height="1" fill="#0000ff"/><rect x="12" y="10" width="1" height="1" fill="#ff0000"/><rect x="12" y="11" width="1" height="1" fill="#fff"/><rect x="13" y="8" width="1" height="1" fill="#0000ff"/><rect x="13" y="9" width="1" height="1" fill="#ffff00"/><rect x="13" y="10" width="1" height="1" fill="#fff"/></g>
<circle cx="9.5" cy="9.5" r="5.3" fill="none" stroke="#000" stroke-width="1.2"/>
<path d="M13.2 13.2 L17.5 17.5" stroke="#000" stroke-width="2.6"/>
</svg>
<div class="a tb" style="left:264px;top:28px;width:23px;height:23px"></div>
<svg class="a" style="left:264px;top:28px" width="23" height="23"><g shape-rendering="crispEdges">
<rect x="3" y="3" width="4" height="4" fill="#ffff00"/><rect x="4" y="3" width="1" height="1" fill="#a0e8ff"/><rect x="3" y="4" width="1" height="1" fill="#a0e8ff"/><rect x="5" y="5" width="1" height="1" fill="#a0e8ff"/><rect x="4" y="6" width="1" height="1" fill="#a0e8ff"/><rect x="6" y="4" width="1" height="1" fill="#a0e8ff"/>
<rect x="3" y="7" width="4" height="1" fill="#000"/><rect x="7" y="3" width="1" height="3" fill="#000"/>
</g>
<path d="M7 6.5 L11 10.5" stroke="#000" stroke-width="1.5"/>
<g shape-rendering="crispEdges">
<rect x="5" y="12" width="1" height="2" fill="#000"/><rect x="4" y="14" width="1" height="2" fill="#000"/><rect x="6" y="14" width="1" height="2" fill="#000"/><rect x="3" y="16" width="1" height="3" fill="#000"/><rect x="7" y="16" width="1" height="3" fill="#000"/><rect x="4" y="16" width="3" height="1" fill="#000"/><rect x="8" y="18" width="1" height="1" fill="#000"/><rect x="9" y="15" width="3" height="1" fill="#000"/>
<rect x="14" y="12" width="4" height="1" fill="#000"/><rect x="13" y="13" width="1" height="4" fill="#000"/><rect x="18" y="13" width="1" height="4" fill="#000"/><rect x="14" y="17" width="1" height="2" fill="#000"/><rect x="17" y="17" width="1" height="2" fill="#000"/><rect x="13" y="18" width="1" height="1" fill="#000"/><rect x="18" y="18" width="1" height="1" fill="#000"/>
</g></svg>
<div class="a tb" style="left:295px;top:28px;width:23px;height:23px"></div>
<svg class="a" style="left:295px;top:28px" width="23" height="23"><g shape-rendering="crispEdges"><rect x="4" y="10" width="14" height="2" fill="#000"/><rect x="10" y="4" width="2" height="14" fill="#000"/></g></svg>
<div class="a tb" style="left:318px;top:28px;width:23px;height:23px"></div>
<svg class="a" style="left:318px;top:28px" width="23" height="23"><g shape-rendering="crispEdges"><rect x="4" y="10" width="14" height="2" fill="#000"/></g></svg>
<div class="a pressed" style="left:349px;top:28px;width:23px;height:23px"></div>
<svg class="a" style="left:349px;top:28px" width="23" height="23"><g shape-rendering="crispEdges"><rect x="7" y="4" width="1" height="14" fill="#909090"/><rect x="10" y="4" width="1" height="14" fill="#909090"/><rect x="13" y="4" width="1" height="14" fill="#909090"/><rect x="16" y="4" width="1" height="14" fill="#909090"/><rect x="5" y="6" width="14" height="1" fill="#909090"/><rect x="5" y="9" width="14" height="1" fill="#909090"/><rect x="5" y="12" width="14" height="1" fill="#909090"/><rect x="5" y="15" width="14" height="1" fill="#909090"/><rect x="7" y="6" width="1" height="1" fill="#000"/><rect x="6" y="6" width="3" height="1" fill="#000" opacity="0.35"/><rect x="7" y="5" width="1" height="3" fill="#000" opacity="0.35"/><rect x="7" y="9" width="1" height="1" fill="#000"/><rect x="6" y="9" width="3" height="1" fill="#000" opacity="0.35"/><rect x="7" y="8" width="1" height="3" fill="#000" opacity="0.35"/><rect x="7" y="12" width="1" height="1" fill="#000"/><rect x="6" y="12" width="3" height="1" fill="#000" opacity="0.35"/><rect x="7" y="11" width="1" height="3" fill="#000" opacity="0.35"/><rect x="7" y="15" width="1" height="1" fill="#000"/><rect x="6" y="15" width="3" height="1" fill="#000" opacity="0.35"/><rect x="7" y="14" width="1" height="3" fill="#000" opacity="0.35"/><rect x="10" y="6" width="1" height="1" fill="#000"/><rect x="9" y="6" width="3" height="1" fill="#000" opacity="0.35"/><rect x="10" y="5" width="1" height="3" fill="#000" opacity="0.35"/><rect x="10" y="9" width="1" height="1" fill="#000"/><rect x="9" y="9" width="3" height="1" fill="#000" opacity="0.35"/><rect x="10" y="8" width="1" height="3" fill="#000" opacity="0.35"/><rect x="10" y="12" width="1" height="1" fill="#000"/><rect x="9" y="12" width="3" height="1" fill="#000" opacity="0.35"/><rect x="10" y="11" width="1" height="3" fill="#000" opacity="0.35"/><rect x="10" y="15" width="1" height="1" fill="#000"/><rect x="9" y="15" width="3" height="1" fill="#000" opacity="0.35"/><rect x="10" y="14" width="1" height="3" fill="#000" opacity="0.35"/><rect x="13" y="6" width="1" height="1" fill="#000"/><rect x="12" y="6" width="3" height="1" fill="#000" opacity="0.35"/><rect x="13" y="5" width="1" height="3" fill="#000" opacity="0.35"/><rect x="13" y="9" width="1" height="1" fill="#000"/><rect x="12" y="9" width="3" height="1" fill="#000" opacity="0.35"/><rect x="13" y="8" width="1" height="3" fill="#000" opacity="0.35"/><rect x="13" y="12" width="1" height="1" fill="#000"/><rect x="12" y="12" width="3" height="1" fill="#000" opacity="0.35"/><rect x="13" y="11" width="1" height="3" fill="#000" opacity="0.35"/><rect x="13" y="15" width="1" height="1" fill="#000"/><rect x="12" y="15" width="3" height="1" fill="#000" opacity="0.35"/><rect x="13" y="14" width="1" height="3" fill="#000" opacity="0.35"/><rect x="16" y="6" width="1" height="1" fill="#000"/><rect x="15" y="6" width="3" height="1" fill="#000" opacity="0.35"/><rect x="16" y="5" width="1" height="3" fill="#000" opacity="0.35"/><rect x="16" y="9" width="1" height="1" fill="#000"/><rect x="15" y="9" width="3" height="1" fill="#000" opacity="0.35"/><rect x="16" y="8" width="1" height="3" fill="#000" opacity="0.35"/><rect x="16" y="12" width="1" height="1" fill="#000"/><rect x="15" y="12" width="3" height="1" fill="#000" opacity="0.35"/><rect x="16" y="11" width="1" height="3" fill="#000" opacity="0.35"/><rect x="16" y="15" width="1" height="1" fill="#000"/><rect x="15" y="15" width="3" height="1" fill="#000" opacity="0.35"/><rect x="16" y="14" width="1" height="3" fill="#000" opacity="0.35"/></g></svg>
<div class="a pressed" style="left:372px;top:28px;width:23px;height:23px"></div>
<svg class="a" style="left:372px;top:28px" width="23" height="23"><g shape-rendering="crispEdges">
<rect x="4" y="8" width="1" height="7" fill="#000"/><rect x="5" y="11" width="5" height="1" fill="#000"/>
<rect x="10" y="11" width="9" height="1" fill="#707070"/><rect x="19" y="8" width="1" height="7" fill="#707070"/>
<rect x="9" y="5" width="1" height="1" fill="#000"/><rect x="10" y="4" width="1" height="5" fill="#000"/><rect x="9" y="8" width="3" height="1" fill="#000"/><rect x="12" y="8" width="1" height="1" fill="#000"/>
<rect x="14" y="4" width="2" height="1" fill="#707070"/><rect x="13" y="5" width="1" height="3" fill="#707070"/><rect x="16" y="5" width="1" height="3" fill="#707070"/><rect x="14" y="8" width="2" height="1" fill="#707070"/>
</g></svg>
<div class="a tb" style="left:395px;top:28px;width:23px;height:23px"></div>
<svg class="a" style="left:395px;top:28px" width="23" height="23"><g shape-rendering="crispEdges">
<rect x="3" y="3" width="16" height="16" fill="#ffff00"/>
<rect x="3" y="4" width="16" height="3" fill="#808080"/>
<rect x="3" y="7" width="2" height="2" fill="#ff0000"/><rect x="17" y="7" width="2" height="2" fill="#ff0000"/>
<rect x="3" y="14" width="16" height="1" fill="#000"/><rect x="4" y="11" width="1" height="7" fill="#000"/><rect x="11" y="11" width="1" height="7" fill="#000"/><rect x="18" y="11" width="1" height="7" fill="#000"/><rect x="3" y="12" width="1" height="5" fill="#000"/>
<rect x="6" y="12" width="1" height="1" fill="#000"/><rect x="5" y="13" width="1" height="1" fill="#000"/><rect x="5" y="15" width="1" height="1" fill="#000"/><rect x="9" y="16" width="1" height="1" fill="#000"/><rect x="10" y="15" width="1" height="1" fill="#000"/><rect x="13" y="12" width="1" height="1" fill="#000"/><rect x="12" y="13" width="1" height="1" fill="#000"/><rect x="16" y="16" width="1" height="1" fill="#000"/><rect x="17" y="15" width="1" height="1" fill="#000"/><rect x="17" y="13" width="1" height="1" fill="#000"/>
</g></svg>
<div class="a tb" style="left:418px;top:28px;width:12px;height:23px"></div><svg class="a" style="left:418px;top:28px" width="12" height="23"><g shape-rendering="crispEdges"><rect x="4" y="11" width="5" height="1"/><rect x="5" y="12" width="3" height="1"/><rect x="6" y="13" width="1" height="1"/></g></svg>
<div class="a tb" style="left:431px;top:28px;width:23px;height:23px"></div>
<svg class="a" style="left:431px;top:28px" width="23" height="23">
<rect x="3" y="3" width="16" height="16" fill="#ffff00" shape-rendering="crispEdges"/>
<path d="M6.5 18.5 L14.5 3.5" stroke="#000" stroke-width="1.7" stroke-dasharray="3.5 2.5"/>
</svg>
<div class="a tb" style="left:454px;top:28px;width:12px;height:23px"></div><svg class="a" style="left:454px;top:28px" width="12" height="23"><g shape-rendering="crispEdges"><rect x="4" y="11" width="5" height="1"/><rect x="5" y="12" width="3" height="1"/><rect x="6" y="13" width="1" height="1"/></g></svg>
<div class="a tb" style="left:467px;top:28px;width:23px;height:23px"></div>
<svg class="a" style="left:467px;top:28px" width="23" height="23">
<path d="M4.5 17 L13.5 8" stroke="#000" stroke-width="2.6" stroke-linecap="round"/>
<path d="M12 5 H17.2 V10.2 Z" fill="#000"/>
</svg>
<div class="a tb" style="left:498px;top:28px;width:23px;height:23px"></div>
<svg class="a" style="left:498px;top:28px" width="23" height="23"><g shape-rendering="crispEdges">
<rect x="3" y="3" width="16" height="1" fill="#000"/><rect x="3" y="3" width="1" height="16" fill="#000"/><rect x="10" y="3" width="1" height="7" fill="#000"/><rect x="3" y="9" width="8" height="1" fill="#000"/><rect x="5" y="7" width="3" height="1" fill="#000"/>
<rect x="18" y="4" width="1" height="8" fill="#808080"/><rect x="14" y="11" width="5" height="1" fill="#808080"/><rect x="14" y="11" width="1" height="8" fill="#808080"/><rect x="4" y="18" width="11" height="1" fill="#808080"/><rect x="10" y="10" width="1" height="8" fill="#808080"/>
<rect x="11" y="6" width="1" height="2" fill="#0000ff"/><rect x="12" y="7" width="1" height="1" fill="#606060"/>
<rect x="8" y="10" width="1" height="2" fill="#ff0000"/><rect x="9" y="12" width="1" height="1" fill="#ff0000"/>
<rect x="4" y="12" width="1" height="1" fill="#000"/><rect x="3" y="14" width="2" height="2" fill="#000"/><rect x="4" y="16" width="1" height="1" fill="#000"/>
</g></svg>
<div class="a tb" style="left:529px;top:28px;width:23px;height:23px"></div>
<svg class="a" style="left:529px;top:28px" width="23" height="23"><g shape-rendering="crispEdges">
<rect x="4" y="5" width="1" height="7" fill="#000"/><rect x="5" y="5" width="2" height="1" fill="#000"/><rect x="7" y="6" width="1" height="2" fill="#000"/><rect x="5" y="8" width="2" height="1" fill="#000"/>
<rect x="9" y="8" width="3" height="1" fill="#000"/><rect x="8" y="9" width="1" height="2" fill="#000"/><rect x="12" y="9" width="1" height="2" fill="#000"/><rect x="9" y="11" width="3" height="1" fill="#000"/>
<rect x="14" y="7" width="4" height="1" fill="#000"/><rect x="13" y="8" width="1" height="1" fill="#000"/><rect x="14" y="9" width="3" height="1" fill="#000"/><rect x="17" y="10" width="1" height="1" fill="#000"/><rect x="13" y="11" width="4" height="1" fill="#000"/>
<rect x="4" y="17" width="2" height="1" fill="#000"/><rect x="6" y="16" width="2" height="1" fill="#000"/><rect x="8" y="15" width="1" height="1" fill="#000"/><rect x="10" y="15" width="2" height="1" fill="#000"/><rect x="12" y="14" width="2" height="1" fill="#000"/><rect x="14" y="13" width="1" height="1" fill="#000"/><rect x="16" y="13" width="2" height="1" fill="#000"/>
<rect x="7" y="17" width="2" height="1" fill="#000"/><rect x="9" y="16" width="2" height="1" fill="#000"/><rect x="12" y="16" width="1" height="1" fill="#000"/><rect x="13" y="15" width="2" height="1" fill="#000"/><rect x="15" y="14" width="2" height="1" fill="#000"/><rect x="17" y="14" width="1" height="1" fill="#000"/>
</g></svg>
<div class="a tb" style="left:552px;top:28px;width:23px;height:23px"></div>
<svg class="a" style="left:552px;top:28px" width="23" height="23"><g shape-rendering="crispEdges">
<rect x="5" y="7" width="2" height="1" fill="#000"/><rect x="4" y="8" width="1" height="2" fill="#000"/><rect x="7" y="8" width="1" height="2" fill="#000"/><rect x="3" y="10" width="1" height="4" fill="#000"/><rect x="8" y="10" width="1" height="4" fill="#000"/><rect x="4" y="11" width="4" height="1" fill="#000"/>
<rect x="10" y="7" width="1" height="7" fill="#000"/><rect x="11" y="9" width="2" height="1" fill="#000"/><rect x="13" y="10" width="1" height="3" fill="#000"/><rect x="11" y="13" width="2" height="1" fill="#000"/>
<rect x="16" y="9" width="3" height="1" fill="#000"/><rect x="15" y="10" width="1" height="3" fill="#000"/><rect x="16" y="13" width="3" height="1" fill="#000"/>
</g></svg>
<div class="a pressed" style="left:583px;top:28px;width:23px;height:23px"></div>
<svg class="a" style="left:583px;top:28px" width="23" height="23"><g shape-rendering="crispEdges">
<rect x="4" y="4" width="15" height="1" fill="#ff0000"/><rect x="4" y="4" width="1" height="8" fill="#ff0000"/><rect x="4" y="11" width="8" height="1" fill="#ff0000"/><rect x="11" y="11" width="1" height="7" fill="#ff0000"/><rect x="11" y="17" width="8" height="1" fill="#ff0000"/><rect x="18" y="4" width="1" height="14" fill="#ff0000"/>
<rect x="11" y="3" width="1" height="9" fill="#000"/><rect x="11" y="11" width="9" height="1" fill="#000"/>
</g>
<path d="M12 11 L19.5 3.5" stroke="#000" stroke-width="1.2"/>
</svg>
<div class="a tb" style="left:606px;top:28px;width:23px;height:23px"></div>
<svg class="a" style="left:606px;top:28px" width="23" height="23">
<rect x="4.5" y="5.5" width="13" height="11" fill="none" stroke="#ff0000" shape-rendering="crispEdges"/>
<text x="5.4" y="15.8" font-family="Liberation Serif" font-size="14" font-weight="bold" fill="#000" stroke="#000" stroke-width="0.9">S</text>
<path d="M5.5 18.5 L15.5 3.5" stroke="#000" stroke-width="1.2" stroke-dasharray="2.5 1.5"/>
</svg>
<div class="a tb" style="left:629px;top:28px;width:23px;height:23px"></div>
<svg class="a" style="left:629px;top:28px" width="23" height="23">
<path d="M4.5 3 V11 Q5.5 16.5 10.5 17.5 H19" fill="none" stroke="#ff0000" stroke-width="1.1"/>
<text x="7.8" y="15" font-family="Liberation Sans" font-size="12" font-weight="bold" fill="#000" stroke="#000" stroke-width="0.4">R</text>
</svg>
<div class="a tb" style="left:652px;top:28px;width:23px;height:23px"></div>
<svg class="a" style="left:652px;top:28px" width="23" height="23"><g shape-rendering="crispEdges">
<rect x="3" y="4" width="3" height="1" fill="#ff0000"/><rect x="5" y="4" width="1" height="14" fill="#ff0000"/><rect x="3" y="17" width="3" height="1" fill="#ff0000"/><rect x="16" y="4" width="3" height="1" fill="#ff0000"/><rect x="16" y="4" width="1" height="14" fill="#ff0000"/><rect x="16" y="17" width="3" height="1" fill="#ff0000"/>
<rect x="6" y="4" width="10" height="1" fill="#000"/><rect x="6" y="17" width="10" height="1" fill="#000"/>
</g>
<text x="6.9" y="15.6" font-family="Liberation Sans" font-size="12" font-weight="bold" fill="#000" stroke="#000" stroke-width="0.4">V</text>
</svg>
<div class="a tb" style="left:675px;top:28px;width:23px;height:23px"></div>
<svg class="a" style="left:675px;top:28px" width="23" height="23">
<path d="M4 4.5 H12.5 L18.5 10.5 V17.5 H12" fill="none" stroke="#ff0000" stroke-width="1.1"/>
<text x="6" y="14.8" font-family="Liberation Serif" font-size="12.5" font-weight="bold" fill="#000" stroke="#000" stroke-width="0.5">F</text>
<path d="M13.8 13.3 L9.8 16.8" stroke="#0000ff" stroke-width="1.2"/>
<path d="M9 17.5 V13.8 L12.5 17.5 Z" fill="#0000ff"/>
</svg>
<div class="a tb" style="left:706px;top:28px;width:23px;height:23px"></div>
<svg class="a" style="left:706px;top:28px" width="23" height="23"><g shape-rendering="crispEdges">
<rect x="3" y="11" width="13" height="8" fill="#ffff00"/>
<rect x="4" y="13" width="1" height="1" fill="#000"/><rect x="5" y="12" width="2" height="6" fill="#000"/><rect x="4" y="17" width="4" height="1" fill="#000"/>
<rect x="9" y="16" width="2" height="2" fill="#000"/>
<rect x="12" y="12" width="3" height="1" fill="#000"/><rect x="11" y="13" width="2" height="4" fill="#000"/><rect x="14" y="13" width="2" height="4" fill="#000"/><rect x="12" y="17" width="3" height="1" fill="#000"/>
</g>
<path d="M12.5 3.5 V15 L15 12.6 L17.2 16.8 L19 16 L16.8 11.8 H20 Z" fill="#fff" stroke="#000" stroke-width="1"/>
</svg>
<div class="a tb" style="left:729px;top:28px;width:23px;height:23px"></div>
<svg class="a" style="left:729px;top:28px" width="23" height="23">
<path d="M7 5.5 L11.5 10" stroke="#000" stroke-width="1.4" stroke-dasharray="2.5 1"/>
<path d="M11.5 11 L7.5 17" stroke="#000" stroke-width="1.4" stroke-dasharray="2.5 1.5"/>
<path d="M11 6 L16.5 10.5 L11 15 L12.5 10.5 Z" fill="#000" stroke="#000" stroke-width="0.6"/>
</svg>
<div class="a sunken" style="left:164px;top:58px;width:79px;height:20px"></div>
<div class="a raised" style="left:226px;top:60px;width:16px;height:16px"><svg class="a" width="16" height="16"><g shape-rendering="crispEdges"><rect x="4" y="7" width="7" height="1"/><rect x="5" y="8" width="5" height="1"/><rect x="6" y="9" width="3" height="1"/><rect x="7" y="10" width="1" height="1"/></g></svg></div>
<svg class="a" style="left:6px;top:6px" width="15" height="13">
<rect x="0" y="0" width="15" height="13" fill="#f2f0ea"/>
<rect x="0" y="0" width="15" height="2" fill="#c8c4b8"/>
<rect x="14" y="0" width="1" height="13" fill="#c8c4b8"/>
<rect x="0" y="12" width="15" height="1" fill="#c8c4b8"/>
<rect x="1" y="3" width="6" height="4" fill="#4a70b8"/>
<rect x="12" y="3" width="1" height="5" fill="#4060a8"/>
<rect x="1" y="10" width="5" height="1" fill="#607070"/>
<rect x="8" y="10" width="4" height="1" fill="#a0a8a8"/>
</svg>
<svg class="a" style="left:0;top:0" width="1024" height="768">
<defs>
<filter id="sh" x="-20%" y="-20%" width="140%" height="140%"><feDropShadow dx="3.5" dy="3.5" stdDeviation="1.3" flood-color="#202020" flood-opacity="0.45"/></filter>
</defs>
<g filter="url(#sh)">
<rect x="3" y="14" width="150" height="59" fill="none" stroke="#c80000" stroke-width="2"/>
</g>
<g filter="url(#sh)">
<path d="M156 201 H174 L83.5 52 L197 201 H280 A14 14 0 0 1 294 215 V253 A14 14 0 0 1 280 267 H156 A14 14 0 0 1 142 253 V215 A14 14 0 0 1 156 201 Z" fill="#fff" stroke="#c80000" stroke-width="2"/>
</g>
<g filter="url(#sh)">
<path d="M718 95 H856 A16 16 0 0 1 872 111 V148 A16 16 0 0 1 856 164 H763 L734 251 L748 164 H718 A16 16 0 0 1 702 148 V111 A16 16 0 0 1 718 95 Z" fill="#fff" stroke="#c80000" stroke-width="2"/>
</g>
<g filter="url(#sh)" fill="#c80000">
<line x1="146" y1="64" x2="448" y2="295" stroke="#c80000" stroke-width="3"/>
<path d="M137 57 L145.4 72.3 L154 61.1 Z"/>
<path d="M457 302 L440 297.9 L448.6 286.7 Z"/>
</g>
<g font-family="Liberation Sans" fill="#cc1111" text-anchor="middle">
<text x="216.2" y="221" font-size="16">Eingabe</text>
<text x="215.8" y="238.5" font-size="16">dann</text>
<text x="216" y="255.5" font-size="16.3" font-weight="bold">Übernehmen</text>
<text x="784.8" y="135" font-size="16.45">Selektierte APL</text>
</g>
</svg>

</body></html>
